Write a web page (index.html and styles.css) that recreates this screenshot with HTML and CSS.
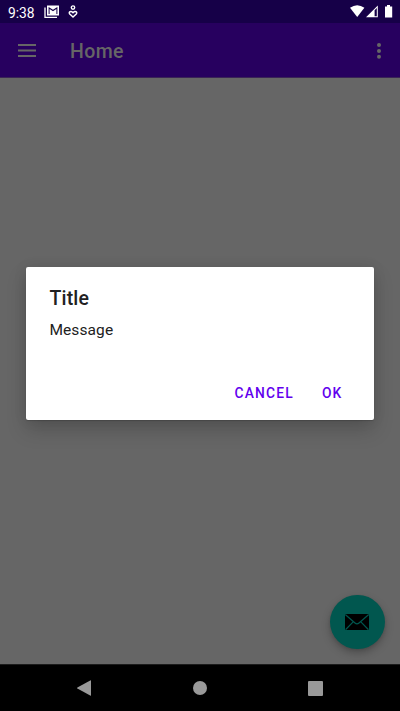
FILE: index.html
```html
<!DOCTYPE html>
<html lang="en">
<head>
<meta charset="utf-8">
<title>Home</title>
<link rel="stylesheet" href="styles.css">
</head>
<body>
<div class="screen">
  <header class="status">
    <span class="clock">9:38</span>
    <svg class="mail-note" width="16" height="14" viewBox="0 0 16 14"><path d="M1 2.5V12.4H13" fill="none" stroke="#fff" stroke-width="1.3"/><path d="M3 .5H15V10.5H3ZM4.6 2V9H5.6V4L9 6.3L12.4 4V9H13.4V2L9 4.8Z" fill="#fff" fill-rule="evenodd"/></svg>
    <svg class="heart-note" width="10" height="14" viewBox="0 0 10 14" fill="none" stroke="#fff" stroke-width="1.4"><circle cx="5" cy="2.6" r="1.7"/><path d="M5 12L1.5 8.7C.4 7.2 2.8 5.3 5 7.8C7.2 5.3 9.6 7.2 8.5 8.7Z"/></svg>
    <svg class="signals" width="44" height="14" viewBox="0 0 44 14" fill="#fff"><path d="M0 2.8Q7.2-2.4 14.4 2.8L7.2 12.1Z"/><path d="M16 12.2L27.8.4V12.2ZM24.6 5.2V11.2H26.8V3Z" fill-rule="evenodd"/><path d="M35 1.4H37V.1H40V1.4H42.2V12.5H35Z"/></svg>
  </header>
  <div class="appbar">
    <svg class="menu" width="18" height="14" viewBox="0 0 18 14" fill="#666"><path d="M0 0H18V1.9H0ZM0 5.5H18V7.4H0ZM0 11.1H18V13H0Z"/></svg>
    <h1 class="page-title">Home</h1>
    <svg class="more" width="4" height="16" viewBox="0 0 4 16" fill="#666"><circle cx="2" cy="2" r="2"/><circle cx="2" cy="7.9" r="2"/><circle cx="2" cy="13.8" r="2"/></svg>
  </div>
  <main class="content">
    <button class="fab" aria-label="Mail">
      <svg width="24" height="16" viewBox="0 0 24 16"><rect width="24" height="16" rx="1.5"/><path d="M.5.7L10 9Q12 10.7 14 9L23.5.7M.7 15.5L8.4 7.7M23.3 15.5L15.6 7.7" fill="none" stroke="#01574f" stroke-width="1.2"/></svg>
    </button>
  </main>
  <nav class="navbar">
    <svg width="14" height="16" viewBox="0 0 14 16"><path d="M13.2.4Q14 0 14 .8V15.2Q14 16 13.2 15.6L.4 8.4Q-.2 8 .4 7.6Z"/></svg>
    <svg class="home" width="14" height="14" viewBox="0 0 14 14"><circle cx="7" cy="7" r="7"/></svg>
    <svg width="15" height="15" viewBox="0 0 15 15"><rect width="15" height="15" rx="1"/></svg>
  </nav>
  <section class="dialog" role="dialog">
    <h2 class="dialog-title">Title</h2>
    <p class="message">Message</p>
    <div class="actions"><button>CANCEL</button><button>OK</button></div>
  </section>
</div>
</body>
</html>
```
FILE: styles.css
```css
* { box-sizing: border-box; }
body { margin: 0; font-family: Roboto, sans-serif; }
h1, h2, p { margin: 0; }
button { border: 0; padding: 0; background: none; font-family: inherit; }
svg { display: block; flex: none; }
.screen { position: relative; display: flex; flex-direction: column; width: 400px; height: 711px; overflow: hidden; background: #666; }
.status { display: flex; height: 23px; padding: 5px 6px 0 8px; background: #160048; color: #fff; }
.clock { width: 36px; font-size: 13.8px; line-height: 16px; }
.heart-note { margin-left: 8px; }
.signals { margin-left: auto; }
.appbar { display: flex; align-items: center; height: 55px; padding: 1px 19.5px 0 18px; background: #27005f; border-bottom: 1px solid #3a2456; }
.page-title { margin-left: 34px; padding-top: 3px; color: #666; font-size: 19.5px; font-weight: 500; line-height: 24px; letter-spacing: .4px; }
.more { margin-left: auto; }
.content { display: flex; flex: 1; align-items: flex-end; justify-content: flex-end; padding: 0 15.5px 15px 0; }
.fab { display: flex; align-items: center; justify-content: center; width: 54.5px; height: 54.5px; border-radius: 50%; background: #01574f; box-shadow: 0 4px 8px rgba(0,0,0,.25), 0 1px 3px rgba(0,0,0,.1); }
.navbar { display: flex; align-items: center; justify-content: space-between; height: 47px; padding: 0 77.5px 0 76.5px; background: #000; border-top: 1px solid #1c1c1c; fill: #999; }
.home { margin-left: 1px; }
.dialog { position: absolute; top: 267px; left: 26px; width: 348px; height: 153px; padding: 20px 25px 0 23.4px; border-radius: 2px; background: #fff; box-shadow: 0 10px 20px rgba(0,0,0,.18), 0 0 14px rgba(0,0,0,.08), 0 1px 1px rgba(0,0,0,.15); color: #212121; }
.dialog-title { font-size: 19.5px; font-weight: 500; line-height: 24px; letter-spacing: .2px; }
.message { margin-top: 9px; font-size: 15.5px; line-height: 20px; letter-spacing: .1px; }
.actions { display: flex; justify-content: flex-end; gap: 28px; margin-top: 44px; padding-right: 6.5px; }
.actions button { color: #6200ee; font-size: 13.8px; font-weight: 500; line-height: 18px; letter-spacing: 1.2px; }
```
